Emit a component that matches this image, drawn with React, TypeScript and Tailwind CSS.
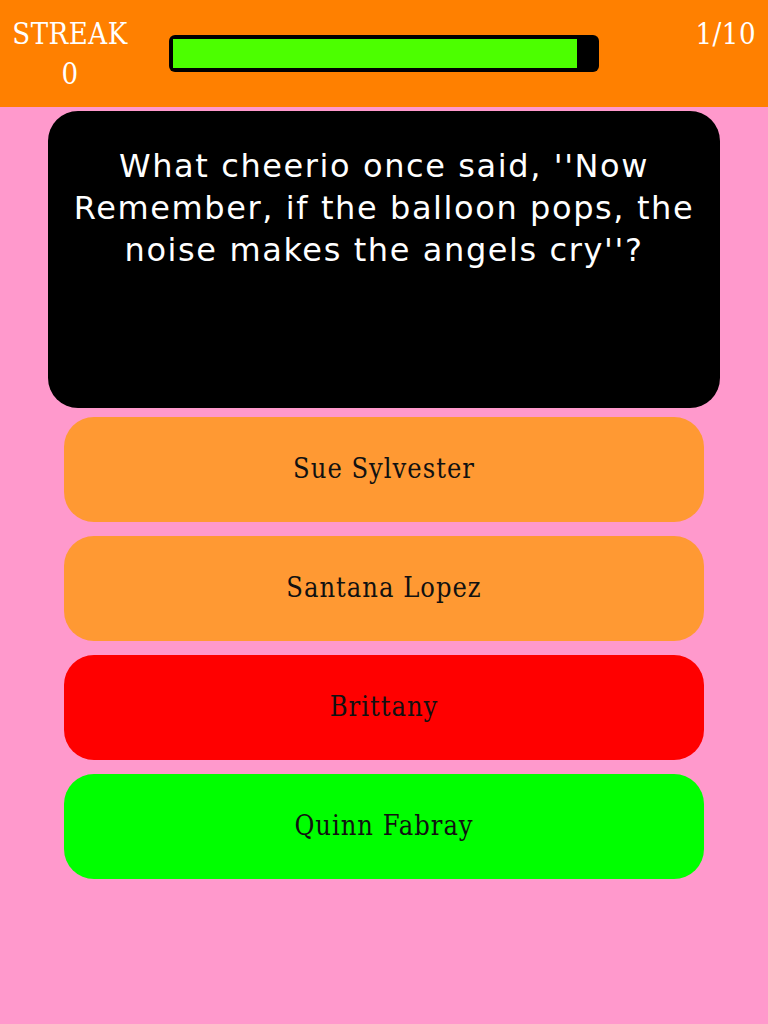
const ANSWERS: Array<[string, string]> = [
  ["Sue Sylvester", "bg-[#ff9933]"],
  ["Santana Lopez", "bg-[#ff9933]"],
  ["Brittany", "bg-[#ff0000]"],
  ["Quinn Fabray", "bg-[#00ff00]"],
];

export default function App() {
  return (
    <div className="w-[768px] h-[1024px] bg-[#ff99cc] flex flex-col overflow-hidden">
      {/* Top bar: streak, progress, counter */}
      <div className="h-[107px] bg-[#ff8000] flex items-start pl-[10px] pr-3 pt-[14px] text-white font-['DejaVu_Serif_Condensed','DejaVu_Serif',serif] text-[29px] leading-[40px] tracking-[0.5px]">
        <div className="flex flex-col items-center w-[120px]">
          <span>STREAK</span>
          <span>0</span>
        </div>
        <div className="ml-[39px] mt-[21px] w-[430px] h-[37px] bg-black rounded-[6px] p-1 pr-[22px]">
          <div className="h-full bg-[#4cff00]" />
        </div>
        <div className="ml-auto">1/10</div>
      </div>

      {/* Question */}
      <div className="mx-12 mt-1 h-[297px] bg-black rounded-[30px] px-3 pt-[34px] text-center text-white font-['DejaVu_Sans',sans-serif] text-[32px] leading-[42px] tracking-[1.6px]">
        What cheerio once said, ''Now Remember, if the balloon pops, the noise makes the angels cry''?
      </div>

      {/* Answers */}
      <div className="mx-16 mt-[9px] flex flex-col gap-[14px]">
        {ANSWERS.map(([label, bg]) => (
          <div
            key={label}
            className={`${bg} h-[105px] rounded-[30px] flex items-center justify-center text-[#111] font-['DejaVu_Serif_Condensed','DejaVu_Serif',serif] text-[27px] tracking-[1px]`}
          >
            {label}
          </div>
        ))}
      </div>
    </div>
  );
}
